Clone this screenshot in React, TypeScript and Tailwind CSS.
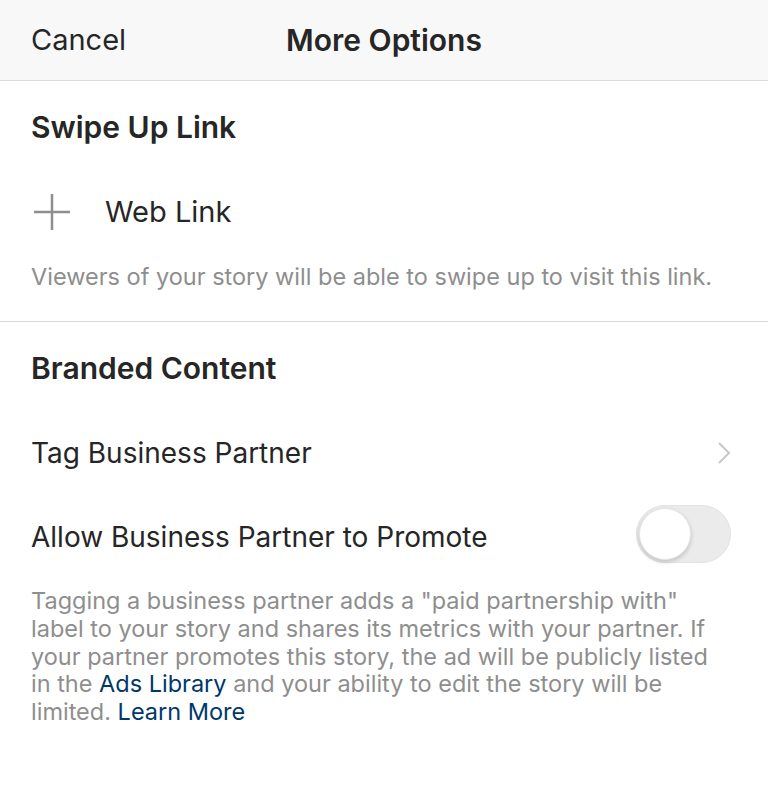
import { useState } from 'react';

function PlusIcon() {
  return (
    <svg width="38" height="38" viewBox="0 0 38 38" fill="none">
      <path d="M19 1v36M1 19h36" stroke="#8e8e8e" strokeWidth="2.5" />
    </svg>
  );
}

function Chevron() {
  return (
    <svg width="14" height="24" viewBox="0 0 14 24" fill="none">
      <path d="M2 2l10 10L2 22" stroke="#c7c7c7" strokeWidth="2" />
    </svg>
  );
}

function Toggle({ on, onChange }: { on: boolean; onChange: (v: boolean) => void }) {
  return (
    <button
      onClick={() => onChange(!on)}
      className={
        'relative h-[58px] w-[95px] shrink-0 rounded-full border border-[#e3e3e3] ' +
        (on ? 'bg-[#3897f0]' : 'bg-[#ebebeb]')
      }
    >
      <span
        className={
          'absolute top-[2px] h-[52px] w-[52px] rounded-full border border-[#e6e6e6] bg-white shadow-[0_2px_4px_rgba(0,0,0,0.18)] ' +
          (on ? 'left-[39px]' : 'left-[2px]')
        }
      />
    </button>
  );
}

export default function App() {
  const [promote, setPromote] = useState(false);

  return (
    <div className="min-h-[795px] bg-white font-['Inter',sans-serif] text-[#262626]">
      {/* Header */}
      <div className="relative flex h-[81px] items-center border-b border-[#dbdbdb] bg-[#f8f8f8] pl-[31px]">
        <span className="text-[29px]">Cancel</span>
        <span className="absolute left-0 right-0 text-center text-[30px] font-semibold">
          More Options
        </span>
      </div>

      {/* Swipe Up Link */}
      <div className="border-b border-[#dbdbdb] pl-[31px] pr-[37px] pb-[30px]">
        <h2 className="pt-[26px] text-[30px] font-semibold leading-[40px]">Swipe Up Link</h2>
        <div className="mt-[45px] flex h-[40px] items-center gap-[34px] pl-[2px]">
          <PlusIcon />
          <span className="text-[29px] leading-[40px]">Web Link</span>
        </div>
        <p className="mt-[31px] text-[23.5px] leading-[28px] text-[#8e8e8e]">
          Viewers of your story will be able to swipe up to visit this link.
        </p>
      </div>

      {/* Branded Content */}
      <div className="pl-[31px] pr-[37px]">
        <h2 className="pt-[26px] text-[30px] font-semibold leading-[40px]">Branded Content</h2>
        <div className="mt-[45px] flex h-[40px] items-center justify-between">
          <span className="text-[28px] leading-[40px]">Tag Business Partner</span>
          <Chevron />
        </div>
        <div className="mt-[32px] flex h-[58px] items-center justify-between">
          <span className="pt-[5px] text-[28px] leading-[40px]">Allow Business Partner to Promote</span>
          <Toggle on={promote} onChange={setPromote} />
        </div>
        <p className="mt-[24px] max-w-[690px] text-[23.5px] leading-[27.75px] text-[#8e8e8e]">
          Tagging a business partner adds a "paid partnership with" label to your story and shares its
          metrics with your partner. If your partner promotes this story, the ad will be publicly listed
          in the <span className="text-[#00376b]">Ads Library</span> and your ability to edit the story
          will be limited. <span className="text-[#00376b]">Learn More</span>
        </p>
      </div>
    </div>
  );
}
